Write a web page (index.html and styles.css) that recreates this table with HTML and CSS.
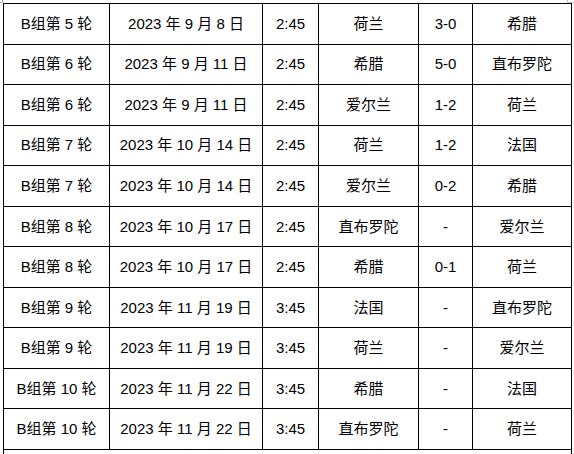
FILE: index.html
```html
<!DOCTYPE html>
<html lang="zh">
<head>
<meta charset="utf-8">
<title>B组赛程</title>
<link rel="stylesheet" href="styles.css">
</head>
<body>
<div class="sheet">
<table class="schedule">
<colgroup>
<col class="c-round"><col class="c-date"><col class="c-time"><col class="c-home"><col class="c-score"><col class="c-away">
</colgroup>
<tbody>
<tr><td>B组第 5 轮</td><td>2023 年 9 月 8 日</td><td>2:45</td><td>荷兰</td><td>3-0</td><td>希腊</td></tr>
<tr><td>B组第 6 轮</td><td>2023 年 9 月 11 日</td><td>2:45</td><td>希腊</td><td>5-0</td><td>直布罗陀</td></tr>
<tr><td>B组第 6 轮</td><td>2023 年 9 月 11 日</td><td>2:45</td><td>爱尔兰</td><td>1-2</td><td>荷兰</td></tr>
<tr><td>B组第 7 轮</td><td>2023 年 10 月 14 日</td><td>2:45</td><td>荷兰</td><td>1-2</td><td>法国</td></tr>
<tr><td>B组第 7 轮</td><td>2023 年 10 月 14 日</td><td>2:45</td><td>爱尔兰</td><td>0-2</td><td>希腊</td></tr>
<tr><td>B组第 8 轮</td><td>2023 年 10 月 17 日</td><td>2:45</td><td>直布罗陀</td><td>-</td><td>爱尔兰</td></tr>
<tr><td>B组第 8 轮</td><td>2023 年 10 月 17 日</td><td>2:45</td><td>希腊</td><td>0-1</td><td>荷兰</td></tr>
<tr><td>B组第 9 轮</td><td>2023 年 11 月 19 日</td><td>3:45</td><td>法国</td><td>-</td><td>直布罗陀</td></tr>
<tr><td>B组第 9 轮</td><td>2023 年 11 月 19 日</td><td>3:45</td><td>荷兰</td><td>-</td><td>爱尔兰</td></tr>
<tr><td>B组第 10 轮</td><td>2023 年 11 月 22 日</td><td>3:45</td><td>希腊</td><td>-</td><td>法国</td></tr>
<tr><td>B组第 10 轮</td><td>2023 年 11 月 22 日</td><td>3:45</td><td>直布罗陀</td><td>-</td><td>荷兰</td></tr>
<tr><td colspan="6">&nbsp;</td></tr>
</tbody>
</table>
</div>
</body>
</html>
```
FILE: styles.css
```css
html, body {
  margin: 0;
  padding: 0;
  background: #ffffff;
  overflow: hidden;
}
body {
  width: 574px;
  height: 454px;
}
.sheet {
  position: relative;
  padding: 3px 0 0 3px;
}
.sheet::before {
  content: "";
  position: absolute;
  left: 0;
  top: 0;
  width: 3px;
  height: 3px;
  border-right: 1px solid #b0b0b0;
  border-bottom: 1px solid #b0b0b0;
  box-sizing: border-box;
}
.sheet::after {
  content: "";
  position: absolute;
  left: 567px;
  top: 0;
  width: 7px;
  height: 3px;
  border-left: 1px solid #c8c8c8;
  border-bottom: 1px solid #c8c8c8;
  box-sizing: border-box;
}
.schedule {
  border-collapse: collapse;
  table-layout: fixed;
  width: 568px;
  font-family: "Liberation Sans", "Noto Sans CJK SC", sans-serif;
  font-size: 15px;
  color: #000000;
}
.c-round { width: 106px; }
.c-date { width: 153px; }
.c-time { width: 56px; }
.c-home { width: 100px; }
.c-score { width: 54px; }
.c-away { width: 99px; }
.schedule td {
  border: 1px solid #000000;
  height: 39.55px;
  padding: 0;
  text-align: center;
  vertical-align: middle;
  white-space: nowrap;
  line-height: 20px;
}
```
